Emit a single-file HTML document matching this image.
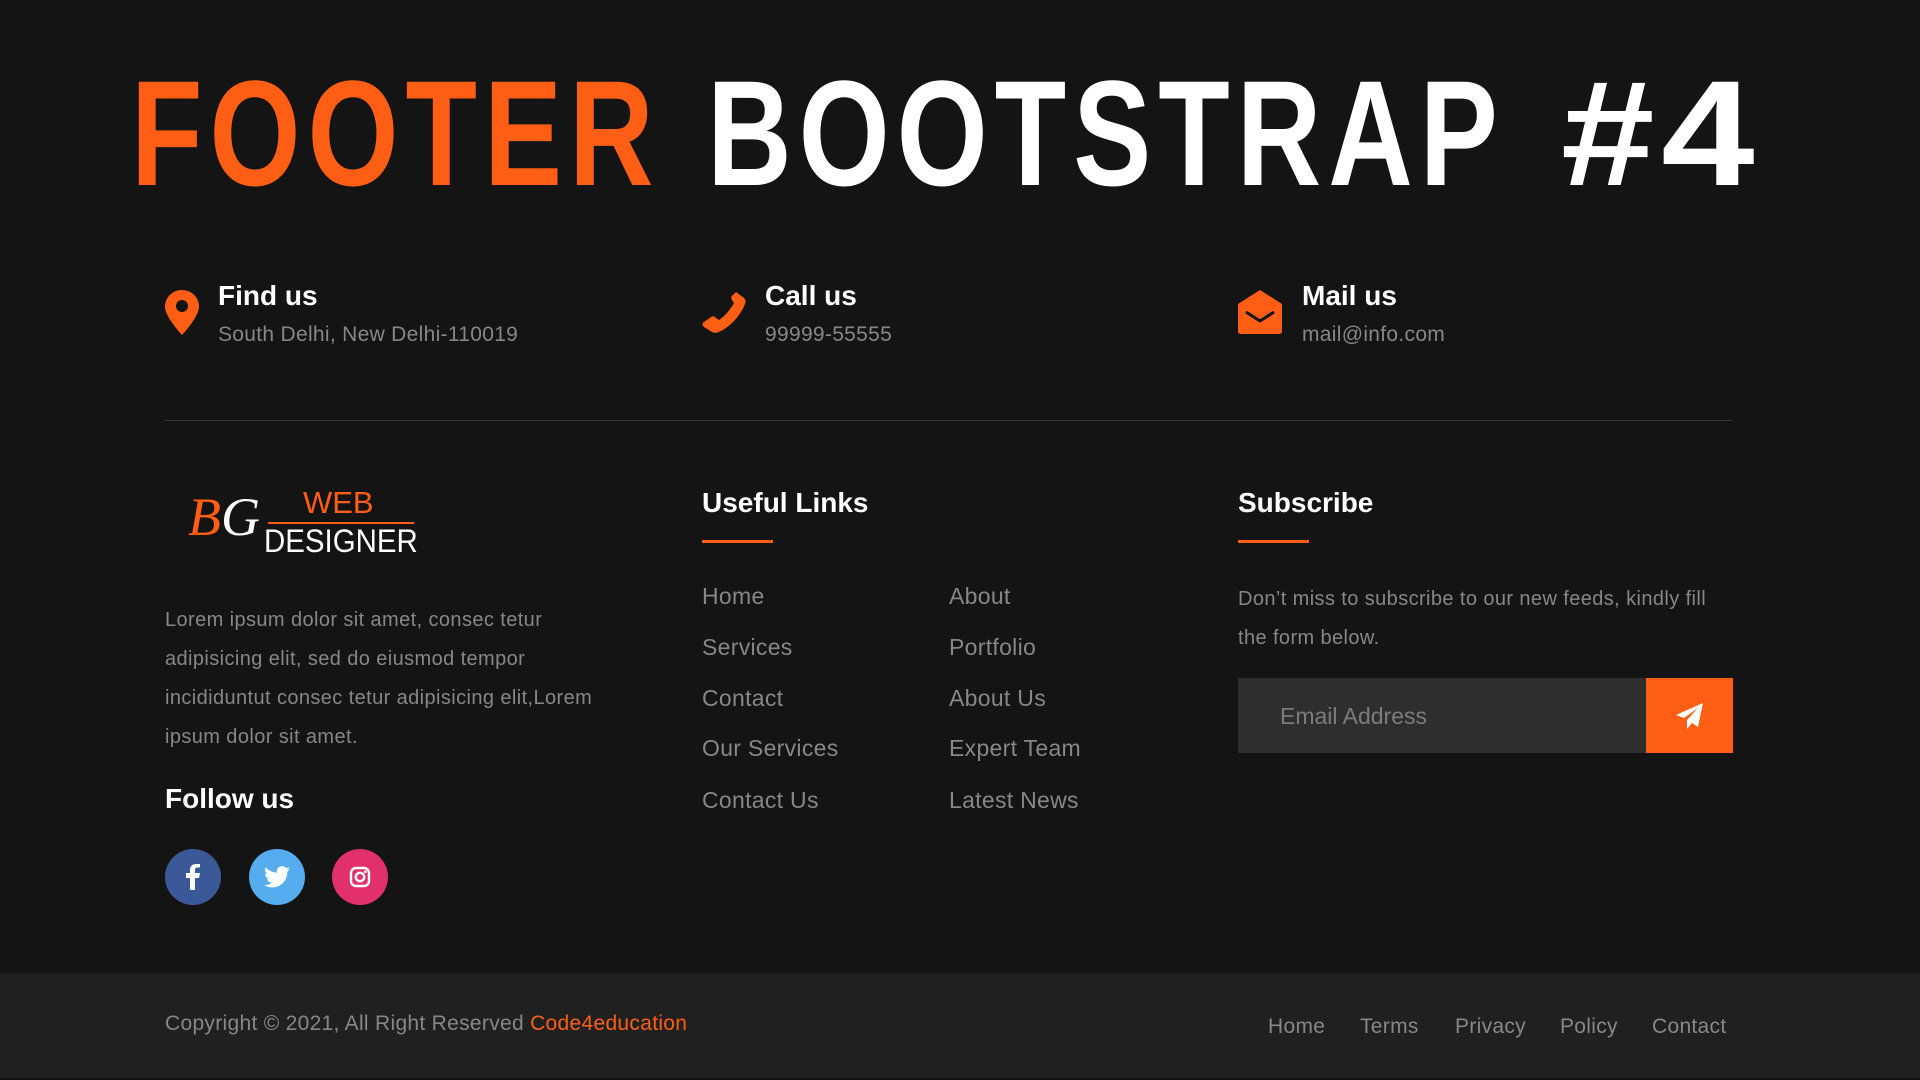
<!DOCTYPE html>
<html><head><meta charset="utf-8"><style>
*{margin:0;padding:0;box-sizing:border-box}
body{width:1920px;height:1080px;background:#151414;font-family:"Liberation Sans",sans-serif;position:relative;overflow:hidden;color:#fff}
.a{position:absolute;white-space:nowrap}
.title{left:131px;top:58px;font-size:150px;font-weight:bold;line-height:150px;letter-spacing:9px;word-spacing:9px;transform:scaleX(0.78);transform-origin:left}
.t4{left:1561px;top:58px;font-size:150px;font-weight:bold;line-height:150px;letter-spacing:6px;transform:scaleX(1.12);transform-origin:left}
.or{color:#ff5e14}
.h3{font-size:28px;font-weight:bold;color:#fff}
.sub{font-size:21px;color:#878787;letter-spacing:0.3px}
.p{font-size:20px;color:#878787;line-height:39px;letter-spacing:0.4px}
.lk{font-size:23px;color:#878787;letter-spacing:0.3px}
.ul{position:absolute;height:3px;width:71px;background:#ff5e14}
.circ{position:absolute;width:56px;height:56px;border-radius:50%;top:849px;display:flex;align-items:center;justify-content:center}
.bot{position:absolute;left:0;top:973px;width:1920px;height:105px;background:#202020}
.bl{font-size:21px;color:#878787;letter-spacing:0.3px}
</style></head><body>
<div class="a title"><span class="or">FOOTER</span> BOOTSTRAP</div>
<div class="a t4">#4</div>

<svg class="a" style="left:165px;top:290px" width="34" height="45" viewBox="0 0 34 45"><path d="M17 0C7.6 0 0 7.4 0 16.6 0 27 17 45 17 45S34 27 34 16.6C34 7.4 26.4 0 17 0z" fill="#ff5e14"/><circle cx="17" cy="16" r="6" fill="#151414"/></svg>
<div class="a h3" style="left:218px;top:280px">Find us</div>
<div class="a sub" style="left:218px;top:323px">South Delhi, New Delhi-110019</div>

<svg class="a" style="left:702px;top:290px" width="44" height="44" viewBox="0 0 44 44"><path d="M34 2l8 6c2 2 2 4 1 6-4 10-13 22-26 28-3 1-5 1-7 0L2 37c-2-2-2-4 0-5l7-5c2-1 4-1 5 1l3 2c6-4 11-10 15-17l-2-3c-1-2-1-4 1-5z" fill="#ff5e14"/></svg>
<div class="a h3" style="left:765px;top:280px">Call us</div>
<div class="a sub" style="left:765px;top:323px">99999-55555</div>

<svg class="a" style="left:1238px;top:290px" width="44" height="44" viewBox="0 0 44 44"><path d="M22 0L44 14V41c0 2-1 3-3 3H3c-2 0-3-1-3-3V14z" fill="#ff5e14"/><path d="M8 22l14 9 14-9" stroke="#151414" stroke-width="3" fill="none"/></svg>
<div class="a h3" style="left:1302px;top:280px">Mail us</div>
<div class="a sub" style="left:1302px;top:323px">mail@info.com</div>

<div class="a" style="left:165px;top:420px;width:1568px;height:1px;background:#373636"></div>

<div class="a" style="left:188px;top:487px;font-family:'Liberation Serif',serif;font-style:italic;font-size:54px;line-height:60px"><span style="color:#ff5e14">B</span><span style="color:#fff">G</span></div>
<div class="a" style="left:303px;top:486px;font-size:31px;color:#ff5e14;line-height:34px">WEB</div>
<div class="a" style="left:268px;top:522px;width:146px;height:2px;background:#ff5e14"></div>
<div class="a" style="left:264px;top:522px;font-size:32px;color:#fff;line-height:38px;transform:scaleX(0.92);transform-origin:left">DESIGNER</div>

<div class="a p" style="left:165px;top:601px">Lorem ipsum dolor sit amet, consec tetur<br>adipisicing elit, sed do eiusmod tempor<br>incididuntut consec tetur adipisicing elit,Lorem<br>ipsum dolor sit amet.</div>
<div class="a h3" style="left:165px;top:783px">Follow us</div>
<div class="circ" style="left:165px;background:#3b5998"><svg width="14" height="26" viewBox="0 0 14 26"><path d="M9 26V14h4l1-5H9V6c0-1.5.5-2.5 2.5-2.5H14V0h-4C6 0 4 2.5 4 6v3H0v5h4v12z" fill="#fff"/></svg></div>
<div class="circ" style="left:249px;background:#55acee"><svg width="26" height="22" viewBox="0 0 24 20"><path d="M24 2.4c-.9.4-1.8.7-2.8.8 1-.6 1.8-1.6 2.2-2.7-1 .6-2 1-3.1 1.2C19.3.6 18 0 16.6 0c-2.7 0-4.9 2.2-4.9 4.9 0 .4 0 .8.1 1.1C7.7 5.8 4.1 3.9 1.7.9c-.4.7-.7 1.6-.7 2.5 0 1.7.9 3.2 2.2 4.1-.8 0-1.6-.2-2.2-.6v.1c0 2.4 1.7 4.4 3.9 4.8-.4.1-.8.2-1.3.2-.3 0-.6 0-.9-.1.6 2 2.4 3.4 4.6 3.4-1.7 1.3-3.8 2.1-6.1 2.1-.4 0-.8 0-1.2-.1C2.2 18.8 4.8 19.6 7.5 19.6c9.1 0 14-7.5 14-14v-.6c1-.7 1.8-1.6 2.5-2.6z" fill="#fff"/></svg></div>
<div class="circ" style="left:332px;background:#e1306c"><svg width="22" height="22" viewBox="0 0 22 22"><rect x="2" y="2" width="18" height="18" rx="5" fill="none" stroke="#fff" stroke-width="2.4"/><circle cx="11" cy="11" r="4.2" fill="none" stroke="#fff" stroke-width="2.4"/><circle cx="16.3" cy="5.7" r="1.3" fill="#fff"/></svg></div>

<div class="a h3" style="left:702px;top:487px">Useful Links</div>
<div class="ul" style="left:702px;top:540px"></div>
<div class="a lk" style="left:702px;top:583px">Home</div>
<div class="a lk" style="left:702px;top:634px">Services</div>
<div class="a lk" style="left:702px;top:685px">Contact</div>
<div class="a lk" style="left:702px;top:735px">Our Services</div>
<div class="a lk" style="left:702px;top:787px">Contact Us</div>
<div class="a lk" style="left:949px;top:583px">About</div>
<div class="a lk" style="left:949px;top:634px">Portfolio</div>
<div class="a lk" style="left:949px;top:685px">About Us</div>
<div class="a lk" style="left:949px;top:735px">Expert Team</div>
<div class="a lk" style="left:949px;top:787px">Latest News</div>

<div class="a h3" style="left:1238px;top:487px">Subscribe</div>
<div class="ul" style="left:1238px;top:540px"></div>
<div class="a p" style="left:1238px;top:580px">Don’t miss to subscribe to our new feeds, kindly fill<br>the form below.</div>
<div class="a" style="left:1238px;top:678px;width:408px;height:75px;background:#2e2e2e"></div>
<div class="a" style="left:1280px;top:703px;font-size:23px;color:#7c7c7c">Email Address</div>
<div class="a" style="left:1646px;top:678px;width:87px;height:75px;background:#ff5e14;display:flex;align-items:center;justify-content:center"><svg width="28" height="26" viewBox="0 0 28 26"><path d="M27 0L0 12l8 3 14-10-11 12v9l5-6 6 4z" fill="#fff"/></svg></div>

<div class="bot"></div>
<div class="a bl" style="left:165px;top:1012px">Copyright © 2021, All Right Reserved <span style="color:#ff5e14">Code4education</span></div>
<div class="a bl" style="left:1268px;top:1015px">Home</div>
<div class="a bl" style="left:1360px;top:1015px">Terms</div>
<div class="a bl" style="left:1455px;top:1015px">Privacy</div>
<div class="a bl" style="left:1560px;top:1015px">Policy</div>
<div class="a bl" style="left:1652px;top:1015px">Contact</div>
</body></html>
